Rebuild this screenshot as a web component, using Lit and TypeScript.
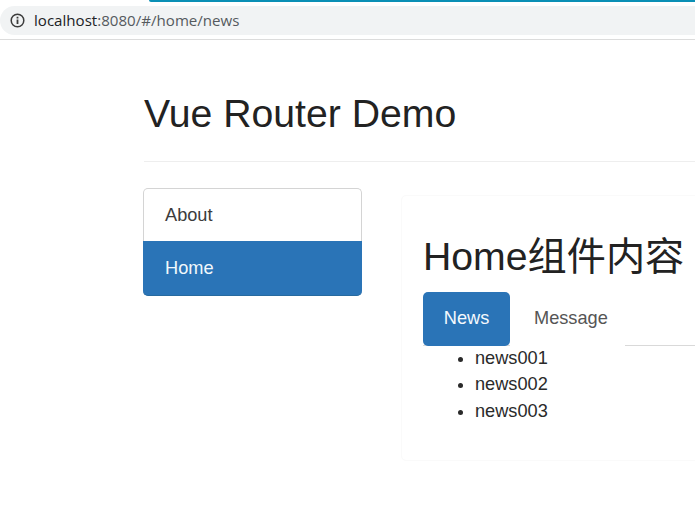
import { LitElement, html, css } from "lit";
import { customElement } from "lit/decorators.js";

@customElement("app-root")
export class AppRoot extends LitElement {
  static styles = css`
    :host { display: block; width: 695px; height: 529px; overflow: hidden; background: #fff; color: #333;
      font-family: "Liberation Sans", "Noto Sans CJK SC", sans-serif; font-size: 18.2px; }
    * { box-sizing: border-box; }
    .chrome { height: 40px; border-bottom: 1px solid #dcdcdc; position: relative; padding-top: 6px; }
    .tabline { position: absolute; left: 149px; right: 0; top: 0; height: 2px; background: #0a8fb5; border-radius: 0 0 0 3px; }
    .omni { height: 29px; background: #f1f3f4; border-radius: 15px 0 0 15px; display: flex; align-items: center; padding-left: 10px; gap: 9px; }
    .omni svg { flex: none; }
    .url { font-family: "Open Sans", sans-serif; font-size: 15.1px; line-height: 26px; height: 28px; color: #555a5e; }
    .url b { font-weight: 400; color: #202124; }
    .page { padding-left: 143px; }
    .header { height: 122px; border-bottom: 1px solid #eeeeee; padding-top: 50px; margin-left: 1px; }
    h2 { margin: 0; font-weight: 400; font-size: 39.2px; line-height: 47px; color: #222; white-space: nowrap; }
    .cols { display: flex; margin-top: 26px; align-items: flex-start; }
    .nav { width: 219px; flex: none; }
    .nav div { line-height: 26px; }
    .nav .about { height: 53px; padding: 13px 21px 0; color: #3c3c3c; border: 1px solid #d4d4d4; border-bottom: 0; border-radius: 5px 5px 0 0; }
    .nav .active { height: 55px; padding: 14px 21px 0 22px; background: #2a74b7; color: #f2f8fc; border-bottom: 1px solid #276a9f; border-radius: 0 0 5px 5px; }
    .well { margin-left: 39px; margin-top: 7px; width: 400px; height: 266px; border: 1px solid #fafafa; flex: none; border-radius: 5px; padding: 37px 0 0 21px; }
    h3 { margin: 0 0 12px; font-weight: 400; font-size: 39.2px; line-height: 47px; color: #222; white-space: nowrap; }
    .tabs { display: flex; height: 54px; border-bottom: 1px solid #d9d9d9; position: relative; }
    .tab { height: 54px; padding: 13px 24px 0; line-height: 26px; color: #555; background: #fff; margin-bottom: -1px; }
    .tab.active { width: 87px; padding: 13px 0 0; text-align: center; background: #2a74b7; color: #f4f9fd; border-radius: 5px; }
    .tab.plain { width: 115px; }
    ul { margin: -1px 0 0; padding: 0 0 0 52px; line-height: 26.4px; color: #2a2a2a; }
  `;

  render() {
    return html`
      <div class="chrome">
        <div class="tabline"></div>
        <div class="omni">
          <svg width="15" height="15" viewBox="0 0 15 15" fill="none" stroke="#3c3c3c">
            <circle cx="7.5" cy="7.5" r="6.3" stroke-width="1.5"></circle>
            <path d="M7.5 6.4v4.6M7.5 3.7v1.7" stroke-width="1.8"></path>
          </svg>
          <span class="url"><b>localhost</b>:8080/#/home/news</span>
        </div>
      </div>
      <div class="page">
        <div class="header"><h2>Vue Router Demo</h2></div>
        <div class="cols">
          <div class="nav">
            <div class="about">About</div>
            <div class="active">Home</div>
          </div>
          <div class="well">
            <h3>Home组件内容</h3>
            <div class="tabs">
              <div class="tab active">News</div>
              <div class="tab plain">Message</div>
            </div>
            <ul>
              <li>news001</li>
              <li>news002</li>
              <li>news003</li>
            </ul>
          </div>
        </div>
      </div>
    `;
  }
}
